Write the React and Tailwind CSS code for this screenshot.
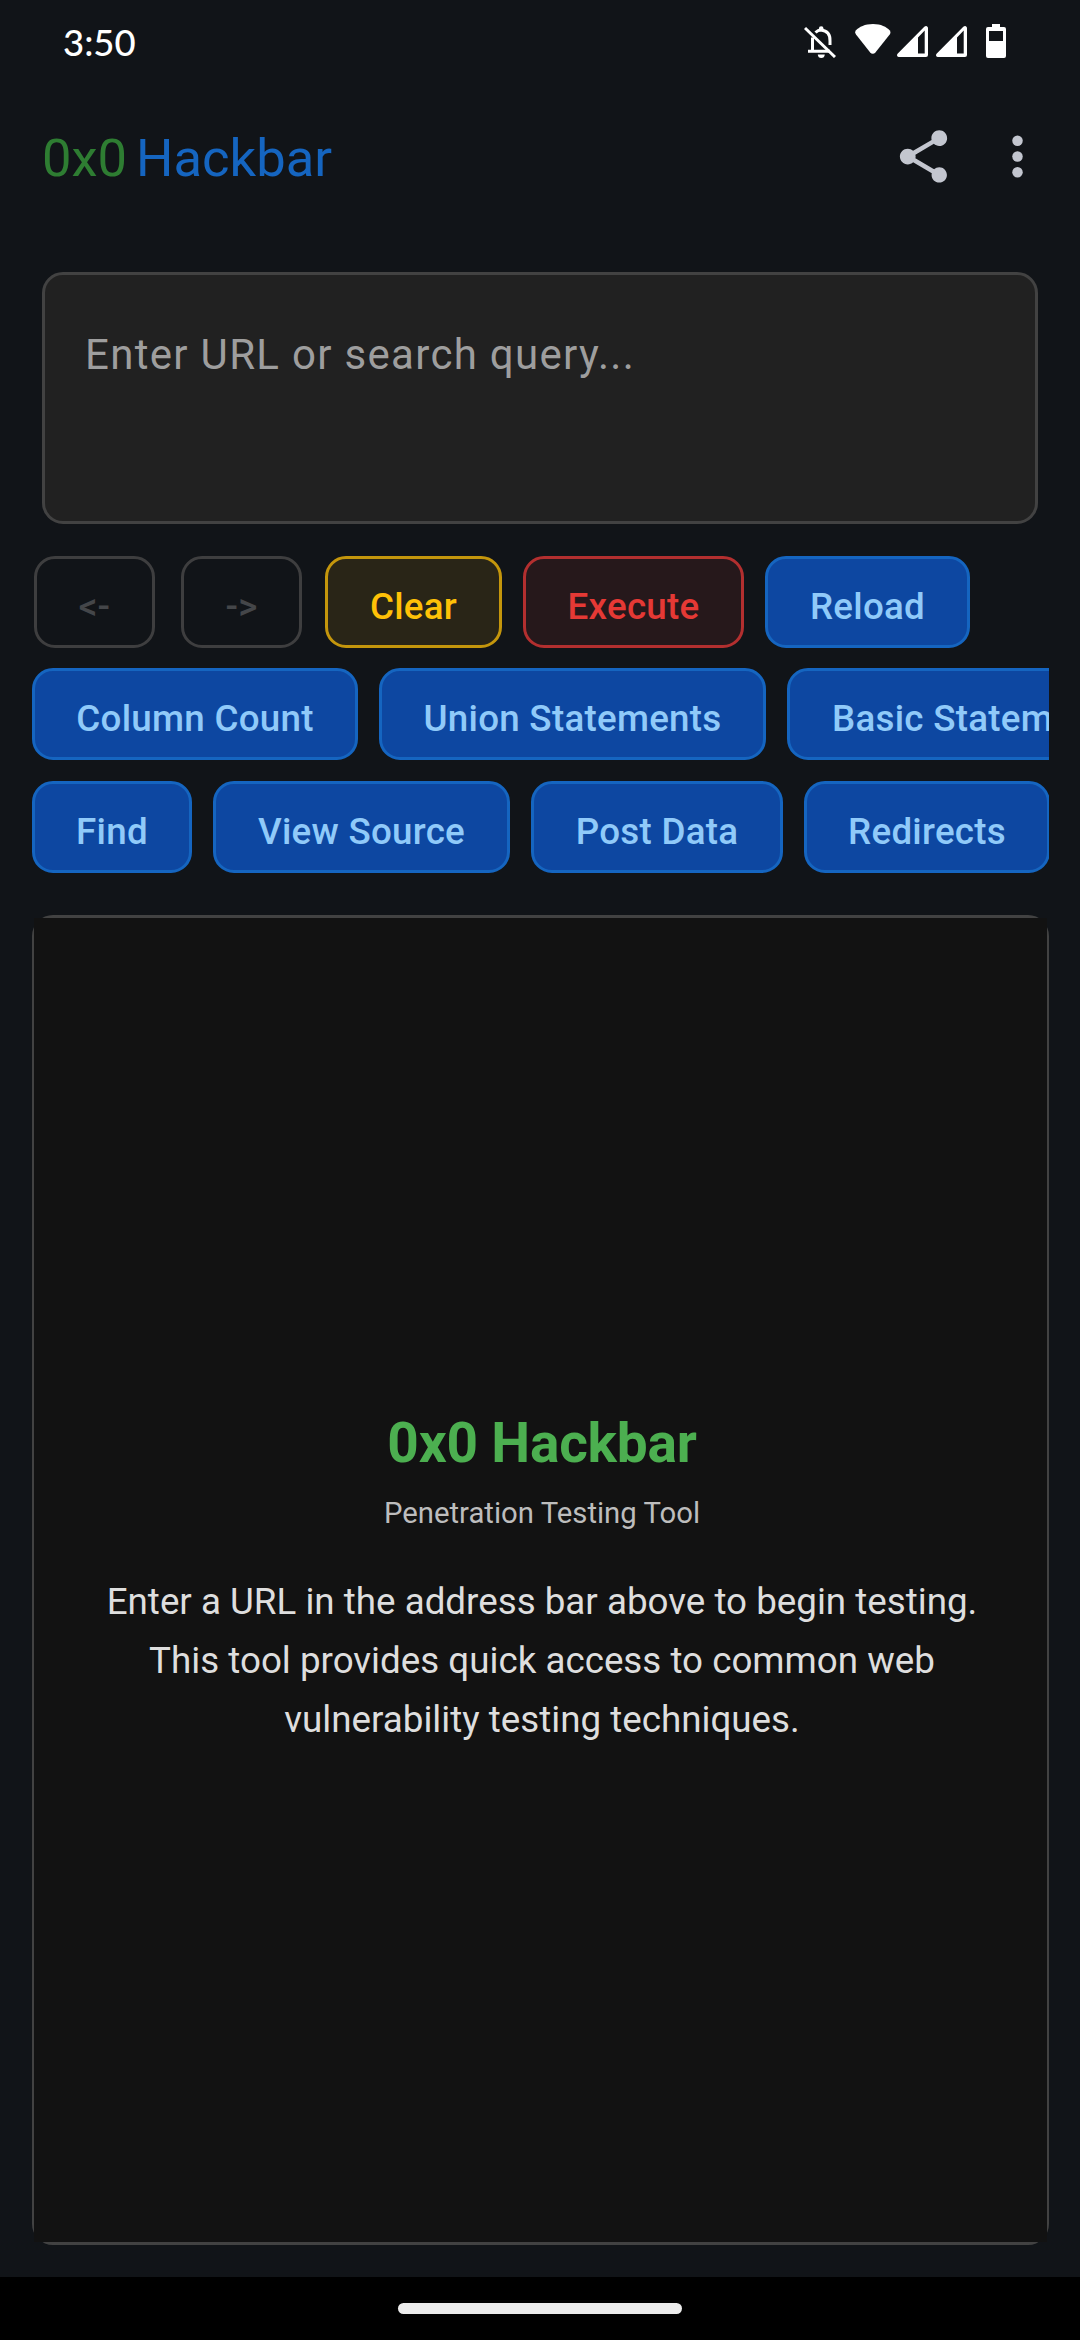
import React from "react";

const TONES = {
  blue: "bg-[#0d47a1] border-[#1565c0] text-[#90caf9]",
  amber: "bg-[#292517] border-[#c4960c] text-[#ffc107]",
  red: "bg-[#26181b] border-[#b32f2f] text-[#e53935]",
  disabled: "bg-transparent border-[#3e3e3f] text-[#444649]",
};

function Chip({ children, width, tone = "blue" }) {
  return (
    <button
      className={`flex h-[92px] shrink-0 items-center justify-center rounded-[21px] border-[3px] pt-[9px] text-[36.75px] leading-[50px] font-medium tracking-[0.26px] whitespace-nowrap ${width} ${TONES[tone]}`}
    >
      {children}
    </button>
  );
}

function StatusBar() {
  return (
    <div className="flex h-[84px] shrink-0 items-start justify-between pl-[63px] pr-[74px]">
      <span className="mt-[20px] font-['Lato'] text-[36.5px] leading-[44px] font-medium text-white">3:50</span>
      <div className="mt-[24px] flex items-start text-white">
        <svg width="32" height="32" viewBox="0 0 32 32" className="mt-[2px]" fill="none" stroke="currentColor">
          <path d="M1 2L31 31" strokeWidth="3" />
          <path d="M8.5 11.5V25M4 25.3H26" strokeWidth="3" />
          <path d="M11.5 6.5Q14 4 17 4Q26.5 5 26 15V19" strokeWidth="3" />
          <circle cx="17.2" cy="2.6" r="2.3" fill="currentColor" stroke="none" />
          <path d="M13.8 28.5H20.8Q20.5 32 17.3 32Q14.1 32 13.8 28.5Z" fill="currentColor" stroke="none" />
        </svg>
        <svg width="36" height="30" viewBox="0 0 36 30" className="ml-[19px]" fill="currentColor">
          <path d="M18 0C10 0 4 3 1 6.2Q-.6 8.3 1 10.6L15 28.2Q17.8 31.5 20.6 28.2L34.7 10.6Q36.2 8.3 34.6 6.2C31.5 3 26 0 18 0Z" />
        </svg>
        <SignalIcon className="ml-[6px] mt-[2px]" />
        <SignalIcon className="ml-[8px] mt-[2px]" />
        <svg width="20" height="34" viewBox="0 0 20 34" className="ml-[19px]" fill="currentColor" fillRule="evenodd">
          <path d="M6 0H14V3H18Q20 3 20 5V32Q20 34 18 34H2Q0 34 0 32V5Q0 3 2 3H6ZM3 7V17H17V7Z" />
        </svg>
      </div>
    </div>
  );
}

function SignalIcon({ className }) {
  return (
    <svg width="31" height="31" viewBox="0 0 31 31" className={className} fill="currentColor" fillRule="evenodd">
      <path d="M27.3 .8Q28.5 -.2 29.8 .2Q31 .7 31 2V29Q31 31 29 31H2Q.5 31 .1 29.8Q-.2 28.6 .8 27.6ZM21 11.5V27.5H27.7V4.6Z" />
    </svg>
  );
}

export default function App() {
  return (
    <div className="flex h-[2340px] w-[1080px] flex-col overflow-hidden bg-[#111418] font-['Roboto',sans-serif]">
      <StatusBar />
      <header className="flex h-[146px] shrink-0 items-center justify-between pl-[42px] pr-[31px]">
        <h1 className="flex gap-[9px] pt-[2px] text-[52.5px] leading-[62px] font-normal">
          <span className="text-[#2e7d32]">0x0</span>
          <span className="text-[#1565c0]">Hackbar</span>
        </h1>
        <div className="mb-[2px] flex gap-[31px] text-[#c3c6cf]">
          <svg width="63" height="63" viewBox="0 0 24 24" fill="currentColor">
            <path d="M18 16.08c-.76 0-1.44.3-1.96.77L8.91 12.7c.05-.23.09-.46.09-.7s-.04-.47-.09-.7l7.05-4.11c.54.5 1.25.81 2.04.81 1.66 0 3-1.34 3-3s-1.34-3-3-3-3 1.34-3 3c0 .24.04.47.09.7L8.04 9.81C7.5 9.31 6.79 9 6 9c-1.66 0-3 1.34-3 3s1.34 3 3 3c.79 0 1.5-.31 2.04-.81l7.12 4.16c-.05.21-.08.43-.08.65 0 1.61 1.31 2.92 2.92 2.92s2.92-1.31 2.92-2.92-1.31-2.92-2.92-2.92z" />
          </svg>
          <svg width="63" height="63" viewBox="0 0 24 24" fill="currentColor">
            <circle cx="12" cy="6" r="2" />
            <circle cx="12" cy="12" r="2" />
            <circle cx="12" cy="18" r="2" />
          </svg>
        </div>
      </header>

      <div className="mx-[42px] mt-[42px] h-[252px] shrink-0 rounded-[21px] border-[3px] border-[#424242] bg-[#212121] px-[40px] pt-[48px] text-[42px] leading-[64px] tracking-[1.31px] text-[#9e9e9e]">
        Enter URL or search query...
      </div>

      <div className="mt-[32px] flex flex-col gap-[21px] pr-[31px] pl-[32px]">
        <div className="-mb-px flex pl-[2px]">
          <Chip tone="disabled" width="w-[121px]">&lt;-</Chip>
          <div className="ml-[26px] mr-[23px] flex">
            <Chip tone="disabled" width="w-[121px]">-&gt;</Chip>
          </div>
          <div className="flex gap-[21px]">
            <Chip tone="amber" width="w-[177px]">Clear</Chip>
            <Chip tone="red" width="w-[221px]">Execute</Chip>
            <Chip width="w-[205px]">Reload</Chip>
          </div>
        </div>
        <div className="flex gap-[21px] overflow-hidden">
          <Chip width="w-[326px]">Column Count</Chip>
          <Chip width="w-[387px]">Union Statements</Chip>
          <Chip width="px-[42px]">Basic Statements</Chip>
        </div>
        <div className="flex gap-[21px] overflow-hidden">
          <Chip width="w-[160px]">Find</Chip>
          <Chip width="w-[297px]">View Source</Chip>
          <Chip width="w-[252px]">Post Data</Chip>
          <Chip width="w-[246px]">Redirects</Chip>
        </div>
      </div>

      <main className="mr-[31px] ml-[32px] mt-[42px] flex h-[1330px] shrink-0 rounded-[21px] border-x-[2px] border-y-[3px] border-[#424242]">
        <div className="flex flex-1 flex-col items-center bg-[#121212] pt-[489px] pl-[3px] text-center">
          <h2 className="text-[55px] leading-[72px] font-bold tracking-[-0.2px] text-[#4caf50]">0x0 Hackbar</h2>
          <p className="mt-[14px] text-[29.3px] leading-[40px] text-[#bdbdbd]">Penetration Testing Tool</p>
          <p className="mt-[39px] text-[36.75px] leading-[59px] text-[#dedede]">
            Enter a URL in the address bar above to begin testing.
            <br />
            This tool provides quick access to common web
            <br />
            vulnerability testing techniques.
          </p>
        </div>
      </main>

      <div className="mt-auto flex h-[63px] shrink-0 items-center justify-center bg-black">
        <div className="h-[11px] w-[284px] rounded-full bg-[#ececec]" />
      </div>
    </div>
  );
}
